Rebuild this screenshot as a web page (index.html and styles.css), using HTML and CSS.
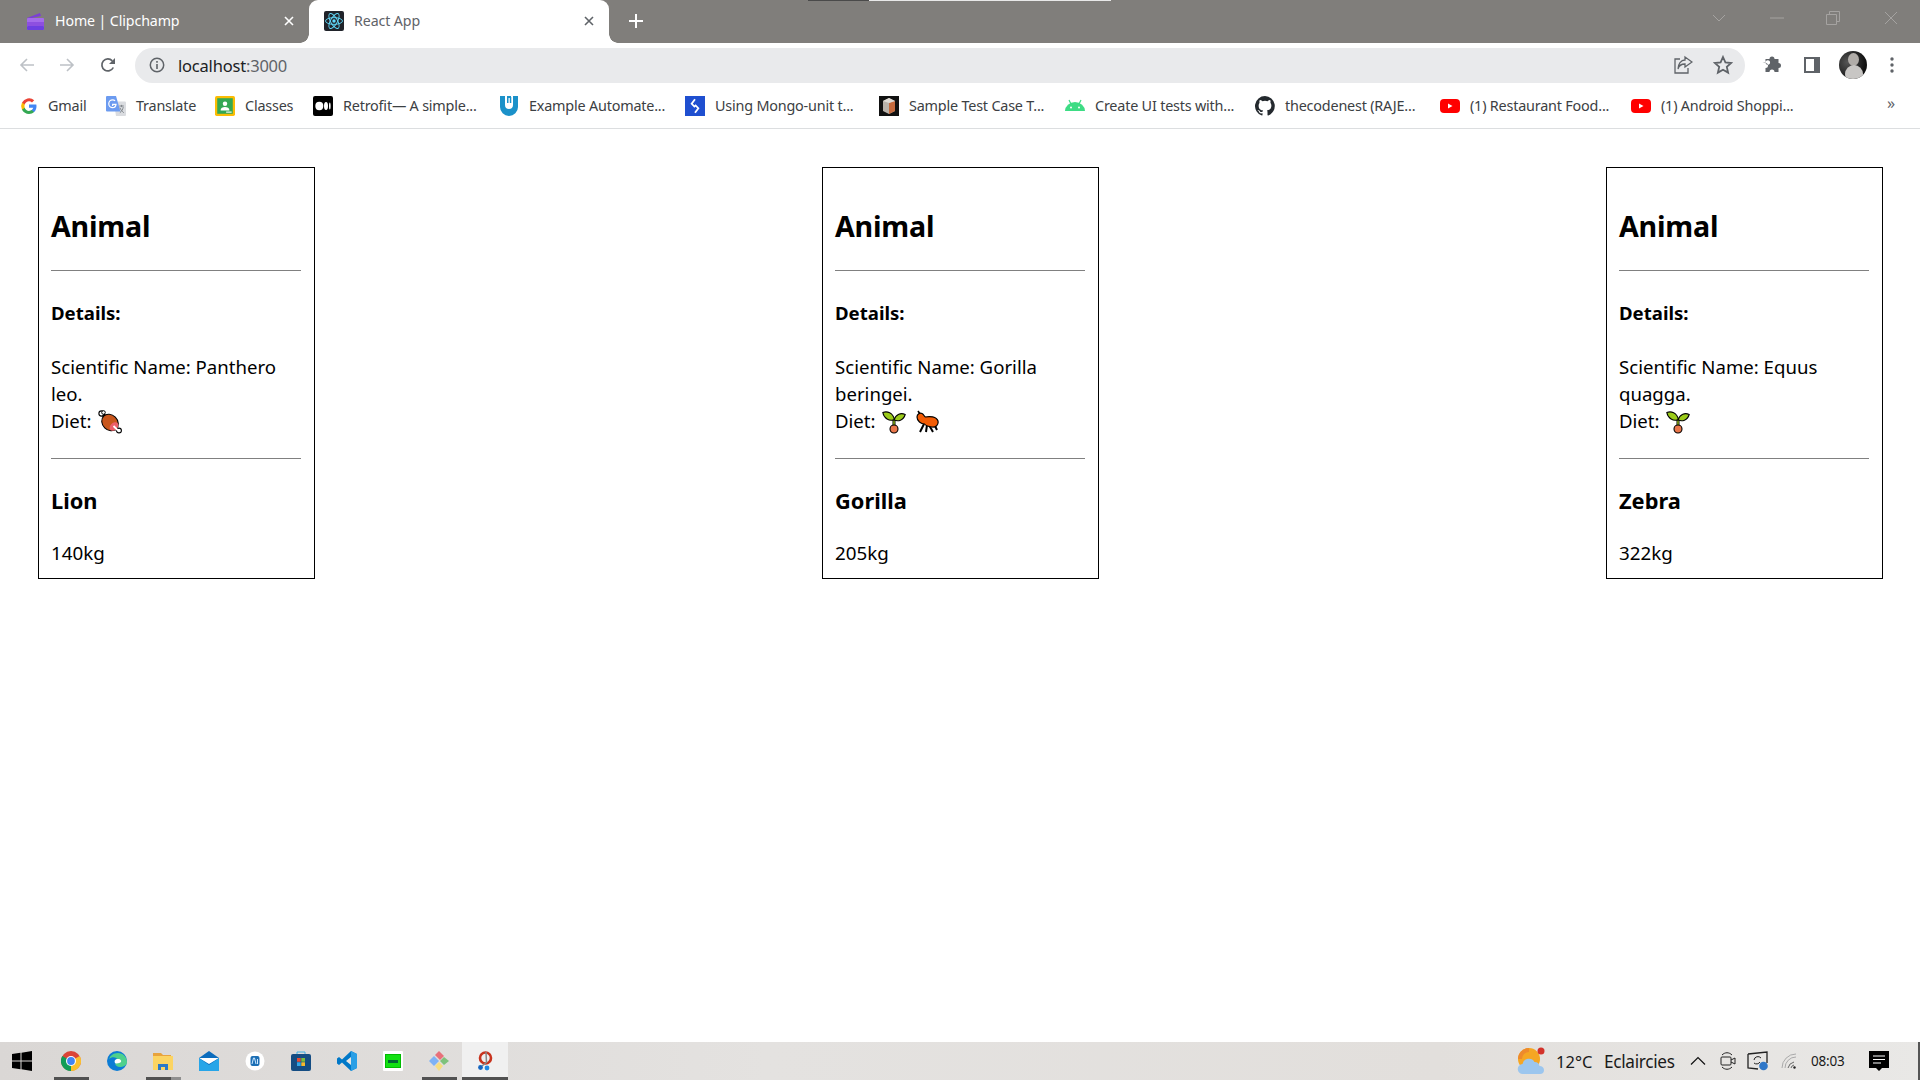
FILE: index.html
```html
<!DOCTYPE html>
<html lang="en">
<head>
<meta charset="utf-8">
<title>React App</title>
<link rel="stylesheet" href="styles.css">
</head>
<body>
<header class="chrome">
  <div class="tabstrip">
    <div class="shade"><span class="shade-dark"></span><span class="shade-light"></span></div>
    <div class="tab tab-inactive">
      <svg class="favicon" viewBox="0 0 18 18"><path d="M1 6 14 1l1 3-14 3z" fill="#7c3fd6"/><rect x="1" y="6" width="17" height="12" rx="1" fill="#a46bea"/><rect x="1" y="10" width="17" height="4" fill="#8d4fe0"/><rect x="1" y="14" width="17" height="4" rx="1" fill="#6d3fe0"/></svg>
      <span class="tab-title">Home | Clipchamp</span>
      <svg class="tab-close" viewBox="0 0 12 12"><path d="M2 2l8 8M10 2l-8 8" stroke="#fff" stroke-width="1.6"/></svg>
    </div>
    <div class="tab tab-active">
      <svg class="favicon favicon-react" viewBox="0 0 20 20"><rect width="20" height="20" rx="2" fill="#20232a"/><g fill="none" stroke="#61dafb" stroke-width=".9"><ellipse cx="10" cy="10" rx="8.5" ry="3.4"/><ellipse cx="10" cy="10" rx="8.5" ry="3.4" transform="rotate(60 10 10)"/><ellipse cx="10" cy="10" rx="8.5" ry="3.4" transform="rotate(120 10 10)"/></g><circle cx="10" cy="10" r="1.7" fill="#61dafb"/></svg>
      <span class="tab-title">React App</span>
      <svg class="tab-close" viewBox="0 0 12 12"><path d="M2 2l8 8M10 2l-8 8" stroke="#5f6368" stroke-width="1.6"/></svg>
    </div>
    <svg class="new-tab" viewBox="0 0 16 16"><path d="M8 1v14M1 8h14" stroke="#fff" stroke-width="2"/></svg>
    <div class="window-controls">
      <svg class="wc-chevron" viewBox="0 0 14 8"><path d="M1 1l6 6 6-6" fill="none" stroke="#a5a3a1" stroke-width="1"/></svg>
      <svg class="wc-min" viewBox="0 0 14 2"><path d="M0 1h14" stroke="#a5a3a1" stroke-width="1"/></svg>
      <svg class="wc-restore" viewBox="0 0 14 14"><path d="M.5 3.500h10v10H.5zM3.500 3.500V.5h10v10h-3" fill="none" stroke="#a5a3a1" stroke-width="1"/></svg>
      <svg class="wc-close" viewBox="0 0 14 14"><path d="M1 1l12 12M13 1 1 13" stroke="#a5a3a1" stroke-width="1"/></svg>
    </div>
  </div>
  <div class="toolbar">
    <svg class="nav nav-back" viewBox="0 0 16 16"><path d="M15 8H2M8 2 2 8l6 6" fill="none" stroke="#bdc1c6" stroke-width="1.6"/></svg>
    <svg class="nav nav-forward" viewBox="0 0 16 16"><path d="M1 8h13M8 2l6 6-6 6" fill="none" stroke="#bdc1c6" stroke-width="1.6"/></svg>
    <svg class="nav nav-reload" viewBox="0 0 16 16"><path d="M13.300 10.500A6 6 0 1 1 12.300 3.800" fill="none" stroke="#5f6368" stroke-width="1.700"/><path d="M15 1v6H9z" fill="#5f6368"/></svg>
    <div class="omnibox">
      <svg class="omni-info" viewBox="0 0 16 16"><circle cx="8" cy="8" r="6.700" fill="none" stroke="#5f6368" stroke-width="1.500"/><path d="M8 7v5M8 4v1.800" stroke="#5f6368" stroke-width="1.600"/></svg>
      <span class="url"><span class="url-host">localhost</span>:3000</span>
      <svg class="omni-share" viewBox="0 0 20 20"><path d="M7 4H2v14h13v-5" fill="none" stroke="#5f6368" stroke-width="1.300"/><path d="M12 2l7 5-7 5V9C9 9 6 10 5 14 5 9 8 5 12 5z" fill="none" stroke="#5f6368" stroke-width="1.300"/></svg>
      <svg class="omni-star" viewBox="0 0 20 20"><path d="M10 2l2.400 5.400 5.800.6-4.400 3.900 1.300 5.700L10 14.700l-5.100 2.900 1.300-5.700L1.800 8l5.800-.6z" fill="none" stroke="#5f6368" stroke-width="1.800"/></svg>
    </div>
    <svg class="tool-puzzle" viewBox="0 0 20 20"><path d="M1 8h3a2.300 2.300 0 1 0 0-.1V4.500h4a2.500 2.500 0 1 1 5 0h4v4a2.500 2.500 0 1 1 0 5v4h-4a2.500 2.500 0 1 0-5 0H4v-4a2.500 2.500 0 1 0 0-5z" fill="#5f6368" transform="translate(-.5 -.5)"/></svg>
    <svg class="tool-panel" viewBox="0 0 18 18"><rect x="1" y="1" width="16" height="16" fill="#5f6368"/><rect x="3" y="3" width="8" height="12" fill="#fff"/></svg>
    <div class="avatar"><span class="avatar-head"></span><span class="avatar-body"></span></div>
    <svg class="tool-dots" viewBox="0 0 4 16"><circle cx="2" cy="2" r="1.700" fill="#5f6368"/><circle cx="2" cy="8" r="1.700" fill="#5f6368"/><circle cx="2" cy="14" r="1.700" fill="#5f6368"/></svg>
  </div>
  <nav class="bookmarks">
    <a class="bm bm-gmail"><svg class="bm-icon" viewBox="0 0 18 18"><path d="M16.500 9.200c0-.6-.1-1.100-.2-1.600H9v3.100h4.200a3.600 3.600 0 0 1-1.600 2.300v2h2.500c1.500-1.300 2.400-3.300 2.400-5.800z" fill="#4285f4"/><path d="M9 17c2.100 0 3.900-.7 5.100-1.900l-2.500-2c-.7.500-1.500.8-2.600.8-2 0-3.700-1.400-4.300-3.200H2v2C3.300 15.300 6 17 9 17z" fill="#34a853"/><path d="M4.700 10.700a4.800 4.800 0 0 1 0-3.100v-2H2a8 8 0 0 0 0 7.200z" fill="#fbbc05"/><path d="M9 4.200c1.200 0 2.200.4 3 1.200l2.200-2.200A8 8 0 0 0 2 5.600l2.700 2C5.300 5.700 7 4.200 9 4.200z" fill="#ea4335"/></svg><span class="bm-text w-gmail">Gmail</span></a>
    <a class="bm"><svg class="bm-icon" viewBox="0 0 18 18"><path d="M7 5h10a1 1 0 0 1 1 1v11a1 1 0 0 1-1 1H9z" fill="#dadce0"/><path d="M1 0h8l4 14H1a1 1 0 0 1-1-1V1a1 1 0 0 1 1-1z" fill="#6c9bf0"/><path d="M6 9v-1.500h3c-.3 2-1.200 3-3 3a3.500 3.500 0 0 1 0-7c1 0 1.700.4 2.200.9" fill="none" stroke="#fff" stroke-width="1.100"/><path d="M12 9h4M14 8v2M12.500 15c2-1.500 2.500-3 3-5M12.500 10.500c.8 2 2 3.500 3.500 4.500" stroke="#80868b" stroke-width=".9" fill="none"/></svg><span class="bm-text w-translate">Translate</span></a>
    <a class="bm"><svg class="bm-icon" viewBox="0 0 18 18"><rect x="0" y="0" width="18" height="18" rx="1.500" fill="#fbbc04"/><rect x="2" y="2" width="14" height="14" fill="#34a853"/><circle cx="9" cy="7" r="2" fill="#fff"/><path d="M5 13c0-4 8-4 8 0z" fill="#fff"/><rect x="10" y="14" width="5" height="1" fill="#fff"/></svg><span class="bm-text w-classes">Classes</span></a>
    <a class="bm"><svg class="bm-icon" viewBox="0 0 20 20"><rect width="20" height="20" rx="2" fill="#000"/><ellipse cx="6.300" cy="10" rx="4" ry="4.200" fill="#fff"/><ellipse cx="13" cy="10" rx="2" ry="3.900" fill="#fff"/><ellipse cx="16.800" cy="10" rx=".8" ry="3.500" fill="#fff"/></svg><span class="bm-text w-long">Retrofit— A simple...</span></a>
    <a class="bm"><svg class="bm-icon" viewBox="0 0 20 20"><path d="M1 0h5v9c0 2.500 1.500 4 4 4s4-1.500 4-4V0h5v11a9 9 0 0 1-18 0z" fill="#1b91c9"/><path d="M8 1h1.500v6H8zM10.800 1h1.500v6h-1.500zM8 0h4v2H8z" fill="#1b91c9"/></svg><span class="bm-text w-long">Example Automate...</span></a>
    <a class="bm"><svg class="bm-icon bm-icon-mongo" viewBox="0 0 18 18"><rect width="18" height="18" fill="#1f4fd0"/><path d="M9 3 6 7l3 3M9 8l3 3-3 4" fill="none" stroke="#fff" stroke-width="1.600"/></svg><span class="bm-text w-mongo">Using Mongo-unit t...</span></a>
    <a class="bm"><svg class="bm-icon" viewBox="0 0 20 20"><rect width="20" height="20" fill="#111"/><path d="M10 2l6 3v10l-6 3-6-3V5z" fill="#b9b2aa"/><path d="M10 7l6-2v10l-6 3z" fill="#c66a3d"/><path d="M10 7 4 5l6-3 6 3z" fill="#e0dcd6"/></svg><span class="bm-text w-long">Sample Test Case T...</span></a>
    <a class="bm"><svg class="bm-icon" viewBox="0 0 20 20"><path d="M0 15a10 9 0 0 1 20 0z" fill="#3ddc84"/><path d="M4 4l2 4M16 4l-2 4" stroke="#3ddc84" stroke-width="1.200"/><circle cx="6" cy="11.500" r="1" fill="#fff"/><circle cx="14" cy="11.500" r="1" fill="#fff"/></svg><span class="bm-text w-create">Create UI tests with...</span></a>
    <a class="bm"><svg class="bm-icon" viewBox="0 0 16 16"><path d="M8 0a8 8 0 0 0-2.500 15.600c.4.100.5-.2.500-.4v-1.400c-2.200.5-2.700-1-2.700-1-.4-.9-.9-1.200-.9-1.200-.7-.5.100-.5.100-.5.800.1 1.200.8 1.200.8.700 1.200 1.900.9 2.300.7.100-.5.300-.9.500-1.100-1.800-.2-3.600-.9-3.600-4 0-.9.300-1.600.8-2.100-.1-.2-.4-1 .1-2.100 0 0 .7-.2 2.200.8a7.600 7.600 0 0 1 4 0c1.500-1 2.200-.8 2.200-.8.400 1.100.2 1.900.1 2.100.5.600.8 1.300.8 2.100 0 3.100-1.900 3.700-3.600 3.900.3.300.5.700.5 1.500v2.200c0 .2.100.5.600.4A8 8 0 0 0 8 0z" fill="#24292e"/></svg><span class="bm-text w-code">thecodenest (RAJE...</span></a>
    <a class="bm"><svg class="bm-icon" viewBox="0 0 20 14"><rect width="20" height="14" rx="4" fill="#f00"/><path d="M8 4.500v5l4.500-2.500z" fill="#fff"/></svg><span class="bm-text w-food">(1) Restaurant Food...</span></a>
    <a class="bm"><svg class="bm-icon" viewBox="0 0 20 14"><rect width="20" height="14" rx="4" fill="#f00"/><path d="M8 4.500v5l4.500-2.500z" fill="#fff"/></svg><span class="bm-text w-long">(1) Android Shoppi...</span></a>
    <span class="bm-more">»</span>
  </nav>
</header>

<main class="cards">
  <article class="card">
    <h2 class="card-title">Animal</h2>
    <hr class="rule">
    <h4 class="card-label">Details:</h4>
    <p class="card-text">Scientific Name: Panthero leo.<br>Diet: <svg class="diet" viewBox="0 0 24 24"><use href="#meat"/></svg></p>
    <hr class="rule rule-lower">
    <h3 class="card-name">Lion</h3>
    <p class="card-weight">140kg</p>
  </article>
  <article class="card">
    <h2 class="card-title">Animal</h2>
    <hr class="rule">
    <h4 class="card-label">Details:</h4>
    <p class="card-text">Scientific Name: Gorilla beringei.<br>Diet: <svg class="diet" viewBox="0 0 24 24"><use href="#sprout"/></svg> <svg class="diet" viewBox="0 0 24 24"><use href="#ant"/></svg></p>
    <hr class="rule rule-lower">
    <h3 class="card-name">Gorilla</h3>
    <p class="card-weight">205kg</p>
  </article>
  <article class="card">
    <h2 class="card-title">Animal</h2>
    <hr class="rule">
    <h4 class="card-label">Details:</h4>
    <p class="card-text">Scientific Name: Equus quagga.<br>Diet: <svg class="diet" viewBox="0 0 24 24"><use href="#sprout"/></svg></p>
    <hr class="rule rule-lower">
    <h3 class="card-name">Zebra</h3>
    <p class="card-weight">322kg</p>
  </article>
</main>

<footer class="taskbar">
  <div class="task task-start"><svg class="task-icon" viewBox="0 0 20 20"><path d="M0 3l8.500-1.200V9.500H0zM9.500 1.700 20 0v9.500H9.500zM0 10.500h8.500v7.700L0 17zM9.500 10.500H20V20L9.500 18.300z" fill="#000"/></svg></div>
  <div class="task task-open"><svg class="task-icon" viewBox="0 0 20 20"><circle cx="10" cy="10" r="10" fill="#db4437"/><path d="M10 10 18.700 5A10 10 0 0 1 10 20z" fill="#fbc02d"/><path d="M10 10 10 20A10 10 0 0 1 1.300 5z" fill="#0f9d58"/><circle cx="10" cy="10" r="5" fill="#fff"/><circle cx="10" cy="10" r="3.900" fill="#4285f4"/></svg></div>
  <div class="task"><svg class="task-icon" viewBox="0 0 20 20"><circle cx="10" cy="10" r="10" fill="#0c7cd5"/><path d="M20 11C20 6 16 2 11 2 6 2 3 5 2 8c3-3 8-2 9 1 .5 2-1 3.500-3 3.500.5 2.500 3 4 6 3.500 3-.5 6-2 6-5z" fill="#4fd08c"/><path d="M8 12c-1-2 0-4 3-4s3.500 2 3 3c-1 .5-4 2.500-6 1z" fill="#fff"/></svg></div>
  <div class="task task-open-multi"><svg class="task-icon" viewBox="0 0 20 20"><path d="M0 2h8l2 2h8v3H0z" fill="#e8a33d"/><path d="M0 5h20v14H0z" fill="#fcd462"/><path d="M5 19v-6h10v6h-3v-3H8v3z" fill="#2b79c8"/></svg></div>
  <div class="task"><svg class="task-icon" viewBox="0 0 20 20"><path d="M0 7 10 0l10 7v13H0z" fill="#0b6cbd"/><path d="M0 7h20L10 13z" fill="#fff"/><path d="M0 7l10 7 10-7v13H0z" fill="#27a5e8"/></svg></div>
  <div class="task"><svg class="task-icon" viewBox="0 0 20 20"><circle cx="10" cy="10" r="9.500" fill="#fff"/><rect x="5.500" y="5" width="9" height="10" rx="2" fill="#1c6fb5"/><path d="M7 13l1.500-6h1L11 13M12.500 8v5" stroke="#cfe8ff" fill="none"/></svg></div>
  <div class="task"><svg class="task-icon" viewBox="0 0 20 20"><path d="M6 3V1h8v2" fill="none" stroke="#3fb0e5"/><rect y="3" width="20" height="17" rx="2" fill="#154d83"/><rect x="6" y="7" width="3.700" height="3.700" fill="#e94b35"/><rect x="10.300" y="7" width="3.700" height="3.700" fill="#7cbc3a"/><rect x="6" y="11.300" width="3.700" height="3.700" fill="#31a7e8"/><rect x="10.300" y="11.300" width="3.700" height="3.700" fill="#f7b82b"/></svg></div>
  <div class="task"><svg class="task-icon" viewBox="0 0 20 20"><path d="M14 0 20 3v14l-6 3L5 11.500 2 14l-2-1.500v-5L2 6l3 2.500z" fill="#0078c8"/><path d="M14 6 9 10l5 4z" fill="#e8e6e4"/><path d="M14 0 20 3v14l-6 3z" fill="#2a9fe6"/></svg></div>
  <div class="task"><svg class="task-icon" viewBox="0 0 20 20"><rect width="20" height="20" rx="1" fill="#fff"/><rect x="2" y="3" width="16" height="14" fill="#0b0"/><rect x="3" y="4" width="14" height="12" fill="#12e012"/><path d="M5 9h10v3H5z" fill="#063"/></svg></div>
  <div class="task task-open"><svg class="task-icon" viewBox="0 0 20 20"><path d="M10 10 5 5 0 10l5 5z" fill="#7fb2f5"/><path d="M10 0 6 4l5 5 4-4z" fill="#e8707a"/><path d="M15 6l-4 4 4 4 5-4z" fill="#7ec27b"/><path d="M10 11 6 15l4 5 4-5z" fill="#f7dd80"/></svg></div>
  <div class="task task-active"><svg class="task-icon" viewBox="0 0 20 20"><circle cx="10.500" cy="7" r="5.500" fill="none" stroke="#c8331e" stroke-width="2.600"/><path d="M11 1l.5 11M7 15l5-4" stroke="#888" stroke-width="1.500"/><circle cx="5.500" cy="16.500" r="2.400" fill="#1565c0"/><circle cx="12" cy="17" r="2.400" fill="#1e88e5"/></svg></div>
  <div class="tray">
    <svg class="tray-weather" viewBox="0 0 28 28"><circle cx="12" cy="12" r="11" fill="#f5a623"/><path d="M1 12a11 11 0 0 1 11-11v4a7 7 0 0 0-7 7z" fill="#ee8a2c"/><circle cx="24" cy="4" r="3.500" fill="#d3322a"/><path d="M6 27a5 5 0 0 1-.5-10 6.500 6.500 0 0 1 12-2 5 5 0 0 1 5 4 4.200 4.200 0 0 1 4.500 4 4 4 0 0 1-4 4z" fill="#9cc6ee"/></svg>
    <span class="tray-temp">12°C</span>
    <span class="tray-cond">Eclaircies</span>
    <svg class="tray-chevron" viewBox="0 0 16 10"><path d="M1 8.500 8 1.500l7 7" fill="none" stroke="#111" stroke-width="1.200"/></svg>
    <svg class="tray-meet" viewBox="0 0 16 18"><path d="M2 3C5 0 9 0 12 3M2 15c3 3 7 3 10 0" fill="none" stroke="#222"/><rect x="1" y="5" width="10" height="8" rx="1" fill="none" stroke="#222"/><path d="M11 8l4-2v6l-4-2" fill="none" stroke="#222"/></svg>
    <svg class="tray-screen" viewBox="0 0 22 20"><path d="M1 3 20 1v11M1 3v14l10 1" fill="none" stroke="#222" stroke-width="1.300"/><path d="M7 9a4 4 0 0 1 7-2M13 11a4 4 0 0 1-6 1" fill="none" stroke="#222"/><circle cx="16.500" cy="15" r="4.300" fill="#2f77c8"/></svg>
    <svg class="tray-wifi" viewBox="0 0 16 16"><path d="M1 15A14 14 0 0 1 15 1M4 15A11 11 0 0 1 15 4" fill="none" stroke="#aaa" stroke-width="1"/><path d="M7 15a8 8 0 0 1 6-6M10 15a4 4 0 0 1 3-3" fill="none" stroke="#666" stroke-width="1"/><circle cx="13.500" cy="14.500" r="1.200" fill="#222"/></svg>
    <span class="tray-time">08:03</span>
    <svg class="tray-notif" viewBox="0 0 20 20"><path d="M0 0h20v17h-7l-3 3-3-3H0z" fill="#000"/><path d="M4 5h12M4 8.500h12M4 12h8" stroke="#fff" stroke-width="1"/></svg>
  </div>
</footer>

<svg class="defs" aria-hidden="true">
  <defs>
    <symbol id="meat" viewBox="0 0 24 24">
      <path d="M4 3.500l16 17" stroke="#000" stroke-width="3.600"/>
      <circle cx="3.500" cy="3.500" r="2.600" fill="#fff" stroke="#000" stroke-width="1.100"/>
      <circle cx="5.500" cy="2.500" r="1.800" fill="#fff" stroke="#000" stroke-width="1"/>
      <circle cx="21" cy="20.500" r="2.400" fill="#fff" stroke="#000" stroke-width="1.100"/>
      <ellipse cx="12" cy="12.500" rx="9" ry="7.500" transform="rotate(45 12 12.500)" fill="#c8561c" stroke="#000" stroke-width="1.100"/>
      <ellipse cx="16" cy="16.500" rx="3.600" ry="5" transform="rotate(45 16 16.500)" fill="#ec5f6a"/>
      <path d="M15.500 16l4.500 4.500" stroke="#fff" stroke-width="1.800"/>
    </symbol>
    <symbol id="sprout" viewBox="0 0 24 24">
      <path d="M12 10v9" stroke="#000" stroke-width="3"/>
      <path d="M12 10v7" stroke="#9bcb1a" stroke-width="1.300"/>
      <path d="M.8 2.500C5 .8 11 2.500 12.500 9.800 7 11.500 2 8.500.8 2.500z" fill="#9bcb1a" stroke="#000" stroke-width="1.100"/>
      <path d="M23.200 4.500C19 2.500 14 4 12 9.800c4 2 9.500.7 11.200-5.300z" fill="#9bcb1a" stroke="#000" stroke-width="1.100"/>
      <circle cx="12" cy="19" r="4" fill="#e9764a" stroke="#000" stroke-width="1.100"/>
    </symbol>
    <symbol id="ant" viewBox="0 0 24 24">
      <path d="M9 14 5 22M12 15l-1 7M14 15l4 7M20 16l2 4" stroke="#000" stroke-width="2" fill="none"/>
      <path d="M3 1l2 3" stroke="#000" stroke-width="1.600"/>
      <path d="M2 7c0-3 3-4.500 5-3.500 2 1 2 3 3.500 3.500 4-1 11-.5 12.500 4 .8 4-2.500 6.500-6 6-3-.4-6-1-7.500-3C6 14 2 11 2 7z" fill="#f25c05" stroke="#000" stroke-width="1.200"/>
    </symbol>
  </defs>
</svg>
</body>
</html>
```
FILE: styles.css
```css
* { box-sizing: border-box; }
html, body { margin: 0; height: 1080px; overflow: hidden; }
body { display: flex; flex-direction: column; background: #fff; font-family: "Noto Sans", "Open Sans", sans-serif; color: #000; }
svg { display: block; flex: none; }

/* browser chrome */
.chrome { flex: none; height: 129px; display: flex; flex-direction: column; }
.tabstrip { position: relative; height: 43px; background: #807e7b; display: flex; align-items: center; flex: none; }
.shade { position: absolute; top: 0; left: 808px; display: flex; height: 1px; }
.shade-dark { width: 61px; background: #4a4a4a; }
.shade-light { width: 242px; background: #e8e8e8; }
.tab { height: 43px; display: flex; align-items: center; position: relative; font-size: 14.200px; flex: none; padding-bottom: 2px; }
.tab-inactive { width: 309px; padding-left: 26px; color: #fff; }
.tab-active { width: 300px; padding-left: 15px; background: #fff; color: #5f6368; border-radius: 9px 9px 0 0; }
.tab-active::before, .tab-active::after { content: ""; position: absolute; bottom: 0; width: 9px; height: 9px; }
.tab-active::before { left: -9px; background: radial-gradient(circle at 0 0, #807e7b 8.500px, #fff 9px); }
.tab-active::after { right: -9px; background: radial-gradient(circle at 100% 0, #807e7b 8.500px, #fff 9px); }
.favicon { width: 18px; height: 18px; margin-right: 11px; }
.favicon-react { width: 20px; height: 20px; margin-right: 10px; }
.tab-title { flex: 1; letter-spacing: -.1px; }
.tab-close { width: 12px; height: 12px; margin-right: 14px; }
.new-tab { width: 16px; height: 16px; margin-left: 19px; margin-bottom: 2px; }
.window-controls { margin-left: auto; margin-right: 22px; display: flex; align-items: center; height: 36px; align-self: flex-start; }
.wc-chevron { width: 14px; height: 8px; margin-right: 44px; }
.wc-min { width: 14px; height: 2px; margin-right: 42px; }
.wc-restore { width: 14px; height: 14px; margin-right: 44px; }
.wc-close { width: 14px; height: 14px; }

.toolbar { height: 47px; flex: none; display: flex; align-items: center; padding: 0 0 3px 19px; background: #fff; }
.nav { width: 16px; height: 16px; }
.nav-back { margin-right: 24px; }
.nav-forward { margin-right: 25px; }
.nav-reload { margin-right: 19px; }
.omnibox { width: 1610px; height: 35px; border-radius: 18px; background: #e9eaec; display: flex; align-items: center; padding: 0 12px 0 14px; flex: none; }
.omni-info { width: 16px; height: 16px; margin-right: 13px; }
.url { flex: 1; font-size: 16.500px; color: #5f6368; letter-spacing: -.2px; }
.url-host { color: #202124; }
.omni-share { width: 20px; height: 20px; margin-right: 20px; }
.omni-star { width: 20px; height: 20px; }
.tool-puzzle { width: 20px; height: 20px; margin-left: 17px; }
.tool-panel { width: 18px; height: 18px; margin-left: 21px; }
.avatar { width: 28px; height: 28px; border-radius: 50%; margin-left: 18px; background: radial-gradient(circle at 30% 40%, #555, #111 70%); position: relative; overflow: hidden; flex: none; }
.avatar-head { position: absolute; left: 9px; top: 2px; width: 11px; height: 13px; border-radius: 50%; background: #b0aca8; }
.avatar-body { position: absolute; left: 6px; top: 14px; width: 18px; height: 18px; border-radius: 50%; background: #c8c6c4; }
.tool-dots { width: 4px; height: 16px; margin-left: 23px; }

.bookmarks { height: 39px; flex: none; display: flex; align-items: center; padding: 0 0 7px 20px; border-bottom: 1px solid #dcdee0; background: #fff; position: relative; }
.bm { display: flex; align-items: center; font-size: 14.400px; color: #3c4043; white-space: nowrap; flex: none; margin-right: 19px; }
.bm-icon { width: 20px; height: 20px; margin-right: 10px; }
.bm-gmail .bm-icon { width: 18px; height: 18px; margin-right: 10px; }
.bm-text { display: block; letter-spacing: -.2px; }
.w-gmail { width: 39px; }
.w-translate { width: 60px; }
.w-classes { width: 49px; }
.w-long { width: 137px; }
.w-mongo { width: 145px; }
.w-create { width: 141px; }
.w-code { width: 136px; }
.w-food { width: 142px; }
.bm-more { position: absolute; left: 1887px; top: 2px; font-size: 16px; color: #5f6368; }

/* page */
.cards { flex: 1; display: flex; justify-content: space-between; align-items: flex-start; padding: 38px 37px 0 38px; }
.card { width: 277px; height: 412px; border: 1px solid #000; padding: 0 13px 0 12px; }
.card-title { margin: 38px 0 24px; font-size: 28.600px; line-height: 40px; font-weight: 700; letter-spacing: -.2px; }
.rule { margin: 0; border: 0; border-top: 1px solid #808080; height: 1px; }
.card-label { margin: 28px 0 0; font-size: 18.600px; line-height: 27px; font-weight: 700; }
.card-text { margin: 27px 0 0; font-size: 18.600px; line-height: 27px; }
.diet { display: inline-block; width: 24px; height: 24px; vertical-align: -6px; margin: 0 2px; }
.rule-lower { margin-top: 24px; }
.card-name { margin: 28px 0 0; font-size: 21.800px; line-height: 27px; font-weight: 700; }
.card-weight { margin: 26px 0 0; font-size: 18.800px; line-height: 27px; }
.defs { position: absolute; width: 0; height: 0; }

/* taskbar */
.taskbar { flex: none; height: 38px; display: flex; align-items: center; background: linear-gradient(90deg, #dad7d5, #e4e2e0 40%, #e2dfdc 75%, #e9e8e6); border-right: 2px solid #555; }
.task { width: 46px; height: 38px; display: flex; align-items: center; justify-content: center; position: relative; flex: none; }
.task-start { width: 48px; padding-right: 4px; }
.task-icon { width: 20px; height: 20px; }
.task-open::after, .task-active::after, .task-open-multi::after { content: ""; position: absolute; bottom: 0; height: 3px; background: #515151; }
.task-open::after { left: 6px; right: 5px; }
.task-open-multi::after { left: 6px; width: 25px; box-shadow: 10px 0 0 #8f8f8f; }
.task-active { background: #f0f0f0; }
.task-active::after { left: 0; right: 0; }
.tray { margin-left: auto; display: flex; align-items: center; height: 38px; padding-right: 29px; color: #1a1a1a; }
.tray-weather { width: 28px; height: 28px; margin-right: 11px; }
.tray-temp { font-size: 16.500px; width: 48px; }
.tray-cond { font-size: 17.200px; width: 72px; letter-spacing: -.3px; white-space: nowrap; }
.tray-chevron { width: 16px; height: 10px; margin-left: 14px; }
.tray-meet { width: 16px; height: 18px; margin-left: 14px; }
.tray-screen { width: 22px; height: 20px; margin-left: 11px; }
.tray-wifi { width: 16px; height: 16px; margin-left: 12px; }
.tray-time { font-size: 13.500px; width: 34px; margin-left: 14px; letter-spacing: -.2px; }
.tray-notif { width: 20px; height: 20px; margin-left: 24px; }
```
